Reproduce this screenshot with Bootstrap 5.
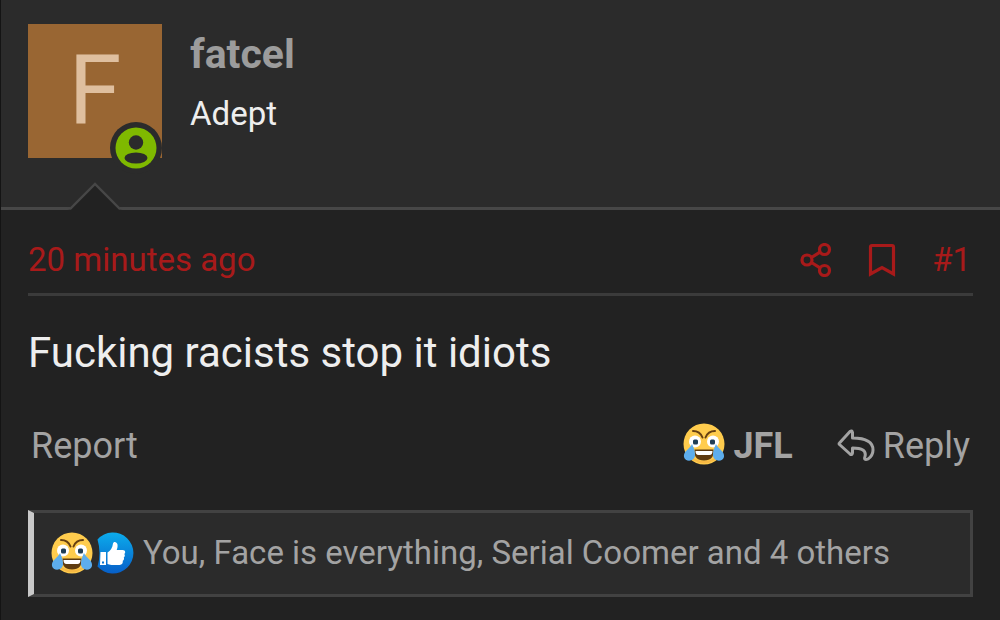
<!DOCTYPE html>
<html lang="en">
<head>
<meta charset="utf-8">
<meta name="viewport" content="width=device-width, initial-scale=1">
<title>Forum post</title>
<link href="https://cdn.jsdelivr.net/npm/bootstrap@5.3.0/dist/css/bootstrap.min.css" rel="stylesheet">
<style>
body{background:#222;color:#eee;font-family:Roboto,"Noto Sans",sans-serif;font-size:33px;line-height:40px}
a,a:hover,button{color:inherit;text-decoration:none}
.post{border-left:1px solid #141414;min-height:100vh}
.post svg{display:block;flex:none}
.post-user{background:#2b2b2b;border-bottom:3px solid #474747;padding:24px 27px 49px;gap:28px}
.post .avatar{width:134px;height:134px;background:#963;color:#dfbf9f;font-size:96px;line-height:132px}
.online{right:0;bottom:-16px}
.notch{left:66px;bottom:-3px}
.user-text{padding-top:6px}
.user-name{font-size:41px;line-height:48px;color:#9c9c9c}
.post-body{padding:30px 27px 20px}
.post-meta{color:#a81a1a;border-bottom:3px solid #3b3b3b;padding-bottom:13px}
.meta-tools{gap:36px;padding-right:2px}
.message{font-size:42px;line-height:48px;margin:33px 0 46px}
.actions{font-size:36px;line-height:44px;color:#a3a3a3;margin-bottom:41px;padding:0 3px}
.right-actions{gap:44px}
.post .reactions{background:#2b2b2b;border:3px solid #424242;border-left:6px solid #c9c9c9;color:#a3a3a3;padding:19px 17px 20px;gap:9px}
.thumb{margin-left:-1px}
</style>
</head>
<body>
<svg width="0" height="0" class="position-absolute" aria-hidden="true">
  <defs>
    <symbol id="laugh" viewBox="0 0 42 42">
      <circle cx="21" cy="21" r="20.500" fill="#ffcc4d"/>
      <path d="M3 29a20 20 0 0 0 36 0q-8 9-18 9T3 29z" fill="#f7b944"/>
      <circle cx="12" cy="18.500" r="6" fill="#fff"/>
      <circle cx="30" cy="18.500" r="6" fill="#fff"/>
      <rect x="10" y="16.500" width="5" height="5" rx="1.500" fill="#1f3d55"/>
      <rect x="27" y="16.500" width="5" height="5" rx="1.500" fill="#1f3d55"/>
      <path d="M10 8q7 0 9.500 6.500M32 8q-7 0-9.500 6.500" fill="none" stroke="#664012" stroke-width="2" stroke-linecap="round"/>
      <path d="M11.500 26.500h19q1 11-9.500 11t-9.500-11z" fill="#5e3b10"/>
      <path d="M12.500 28h17q0 4-3 4h-11q-3 0-3-4z" fill="#fff"/>
      <path d="M9 21C7 26 0 28 1 34c1 5 10 5 11-1 .3-4-1-8-3-12zM33 21c2 5 9 7 8 13-1 5-10 5-11-1-.3-4 1-8 3-12z" fill="#5dadec"/>
    </symbol>
    <linearGradient id="blue" x2="0" y2="1"><stop stop-color="#0cacec"/><stop offset="1" stop-color="#075fc8"/></linearGradient>
  </defs>
</svg>
<article class="post">
  <header class="post-user d-flex align-items-start position-relative">
    <a href="#" class="avatar position-relative text-center flex-shrink-0" aria-label="fatcel">F
      <svg class="online position-absolute" width="52" height="52" viewBox="0 0 52 52" aria-hidden="true">
        <circle cx="26" cy="26" r="26" fill="#2b2b2b"/><circle cx="26" cy="26" r="20.500" fill="#7fb900"/>
        <circle cx="26" cy="20.500" r="7.200" fill="#2b2b2b"/><ellipse cx="26" cy="36" rx="11.500" ry="5.500" fill="#2b2b2b"/>
      </svg>
    </a>
    <div class="user-text">
      <h1 class="user-name fw-bold mb-3"><a href="#">fatcel</a></h1>
      <div>Adept</div>
    </div>
    <svg class="notch position-absolute" width="56" height="29" viewBox="0 0 56 29" aria-hidden="true">
      <path d="M1 29L28 2L55 29z" fill="#222"/><path d="M0 27.500h3.500L28 3l24.500 24.500H56" fill="none" stroke="#474747" stroke-width="2.400"/>
    </svg>
  </header>
  <div class="post-body">
    <div class="post-meta d-flex justify-content-between align-items-center">
      <a href="#"><time>20 minutes ago</time></a>
      <div class="meta-tools d-flex align-items-center">
        <a href="#" aria-label="Share"><svg width="32" height="34" viewBox="0 0 32 34" fill="none" stroke="currentColor" stroke-width="3.200"><circle cx="7" cy="17" r="5"/><circle cx="24.500" cy="6.500" r="5"/><circle cx="24.500" cy="27.500" r="5"/><path d="M11.500 14.500l8.500-5.300M11.500 19.500l8.500 5.300"/></svg></a>
        <a href="#" aria-label="Bookmark"><svg width="28" height="34" viewBox="0 0 28 34" fill="none" stroke="currentColor" stroke-width="3.200"><path d="M2.500 31V4q0-1.500 1.500-1.500h20q1.500 0 1.500 1.500v27L14 24.500z"/></svg></a>
        <a href="#">#1</a>
      </div>
    </div>
    <p class="message">Fucking racists stop it idiots</p>
    <div class="actions d-flex justify-content-between align-items-center">
      <a href="#">Report</a>
      <div class="right-actions d-flex align-items-center">
        <button type="button" class="border-0 bg-transparent p-0 d-flex align-items-center fw-bold gap-2"><svg class="mb-1" width="42" height="42" aria-hidden="true"><use href="#laugh"/></svg>JFL</button>
        <a href="#" class="d-flex align-items-center gap-2"><svg width="38" height="34" viewBox="0 0 38 34" fill="none" stroke="currentColor" stroke-width="3" stroke-linejoin="round" aria-hidden="true"><path d="M2.500 14L13 2.500q2-1.500 2.500 1v5.500C29 9 36 13 36 21c0 4-2 7-5 9-3 1.500-4 0-3-2.500 1.500-6-3-8.500-12.500-8.500v5q-.5 2.500-2.500 1L2.500 15.500q-.7-.8 0-1.500z"/></svg>Reply</a>
      </div>
    </div>
    <a href="#" class="reactions d-flex align-items-center">
      <span class="d-flex align-items-center"><svg width="42" height="42" aria-hidden="true"><use href="#laugh"/></svg><svg class="thumb" width="42" height="42" viewBox="0 0 42 42" aria-hidden="true">
        <path d="M5.500 7.500A20.500 20.500 0 1 1 5.500 34.500Q9.500 21 5.500 7.500z" fill="url(#blue)"/>
        <path fill-rule="evenodd" d="M8.500 20H14v13H8zM10 29.500v2h2v-2zM15.500 20.500c3-1.500 5-5 5.500-9 .3-2.500 4-2 4.500 1 .3 2-.2 4-.8 5.500h6c3 0 3 3 1.600 4 1 1.300.5 2.600-.5 3.400.6 1.500 0 2.800-1 3.400.3 2.200-.7 4.200-3.200 4.200h-8c-2 0-3-1-4.100-1z" fill="#fff"/>
      </svg></span>
      <span>You, Face is everything, Serial Coomer and 4 others</span>
    </a>
  </div>
</article>
<script src="https://cdn.jsdelivr.net/npm/bootstrap@5.3.0/dist/js/bootstrap.bundle.min.js"></script>
</body>
</html>
